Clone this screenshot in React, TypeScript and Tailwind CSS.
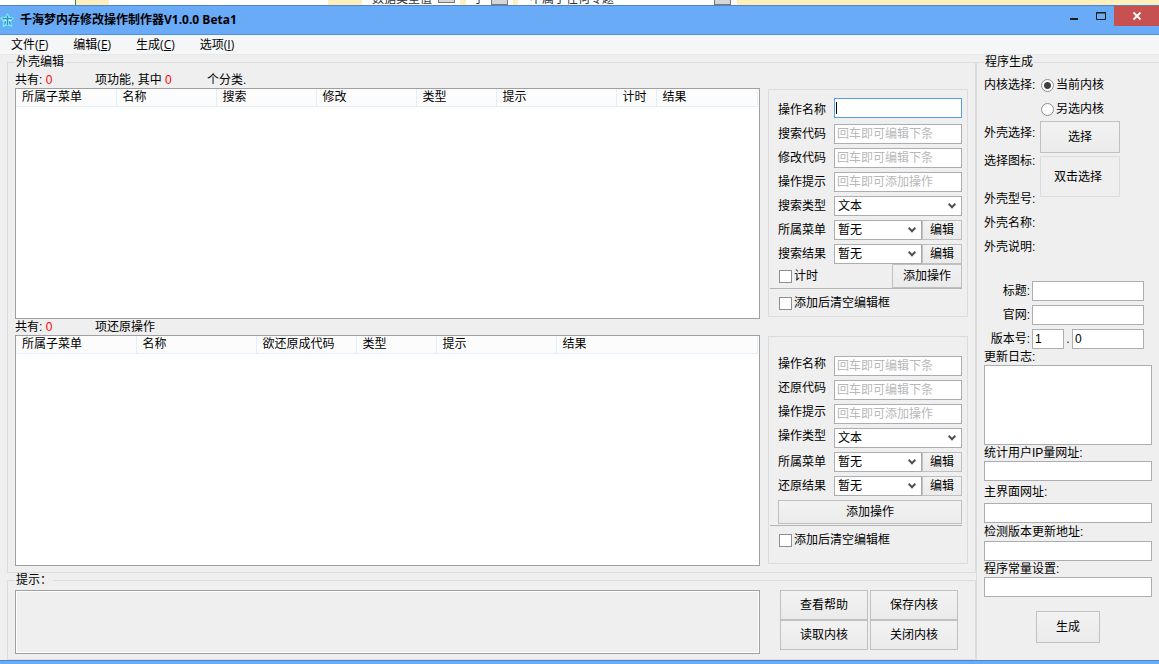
import { useId } from "react";
import clsx from "clsx";

const menus = [
  { label: "文件", hotkey: "F" },
  { label: "编辑", hotkey: "E" },
  { label: "生成", hotkey: "C" },
  { label: "选项", hotkey: "I" },
];

const featureColumns = [
  { label: "所属子菜单", width: "w-[100px]" },
  { label: "名称", width: "w-[100px]" },
  { label: "搜索", width: "w-[100px]" },
  { label: "修改", width: "w-[100px]" },
  { label: "类型", width: "w-20" },
  { label: "提示", width: "w-[120px]" },
  { label: "计时", width: "w-10" },
  { label: "结果", width: "w-auto" },
];

const restoreColumns = [
  { label: "所属子菜单", width: "w-[120px]" },
  { label: "名称", width: "w-[120px]" },
  { label: "欲还原成代码", width: "w-[100px]" },
  { label: "类型", width: "w-20" },
  { label: "提示", width: "w-[120px]" },
  { label: "结果", width: "w-auto" },
];

const urlFields = [
  { label: "统计用户IP量网址:", height: "leading-4" },
  { label: "主界面网址:", height: "leading-[22px]" },
  { label: "检测版本更新地址:", height: "leading-[18px]" },
  { label: "程序常量设置:", height: "leading-4" },
];

const inputClass =
  "h-5 min-w-0 border bg-white px-[2px] text-[12px] leading-4 text-black placeholder:text-[#b8b8b8] placeholder:opacity-100 focus:outline-none";

function Button({ children, className }: { children: React.ReactNode; className?: string }) {
  return (
    <button
      type="button"
      className={clsx(
        "shrink-0 border border-[#c0c0c0] bg-gradient-to-b from-[#f2f2f2] to-[#ebebeb] text-center leading-4 active:bg-[#dadada]",
        className,
      )}
    >
      {children}
    </button>
  );
}

function Group({ title, className, children }: { title: string; className?: string; children: React.ReactNode }) {
  return (
    <fieldset className={clsx("min-w-0 border border-[#dcdcdc]", className)}>
      <legend className="ml-[7px] px-px leading-[14px]">{title}</legend>
      {children}
    </fieldset>
  );
}

function ListView({ columns }: { columns: { label: string; width: string }[] }) {
  return (
    <div className="h-[231px] border border-[#a0a0a0] bg-white pr-px">
      <table className="w-full table-fixed">
        <thead>
          <tr>
            {columns.map((col) => (
              <th
                key={col.label}
                className={clsx(
                  "h-[17px] border-r border-b border-[#e3eefb] bg-[#fcfcfc] pl-[6px] text-left leading-4 font-normal whitespace-nowrap",
                  col.width,
                )}
              >
                {col.label}
              </th>
            ))}
          </tr>
        </thead>
        <tbody />
      </table>
    </div>
  );
}

function TextRow({ label, hint, focused, raised }: { label: string; hint?: string; focused?: boolean; raised?: boolean }) {
  const id = useId();
  return (
    <div className={clsx("flex h-5", focused ? "items-end" : raised ? "items-start" : "items-center")}>
      <label htmlFor={id} className="w-14 shrink-0 leading-4">
        {label}
      </label>
      <div className="relative flex-1">
        <input
          id={id}
          type="text"
          placeholder={focused ? " " : hint}
          className={clsx(inputClass, "peer block w-full", focused ? "border-[#569de5]" : "border-[#abadb3]")}
        />
        {focused && (
          <span className="pointer-events-none absolute top-1 left-[2px] hidden h-3 w-px bg-black peer-placeholder-shown:block peer-focus:hidden" />
        )}
      </div>
    </div>
  );
}

function SelectRow({ label, value, editable, raised }: { label: string; value: string; editable?: boolean; raised?: boolean }) {
  const id = useId();
  return (
    <div className={clsx("flex h-5", raised ? "items-start" : "items-center")}>
      <label htmlFor={id} className="w-14 shrink-0 leading-4">
        {label}
      </label>
      <div className="relative flex-1">
        <select
          id={id}
          className="block h-5 w-full appearance-none border border-[#abadb3] bg-white pl-[3px] leading-4 text-black"
        >
          <option>{value}</option>
        </select>
        <svg
          viewBox="0 0 8 6"
          className="pointer-events-none absolute top-[7px] right-[6px] h-[6px] w-2"
          fill="none"
          stroke="#505050"
          strokeWidth="2"
        >
          <path d="M.7 .8 4 4.2 7.3 .8" />
        </svg>
      </div>
      {editable && <Button className="h-5 w-10">编辑</Button>}
    </div>
  );
}

function CheckBox({ label }: { label: string }) {
  return (
    <label className="flex items-center leading-4">
      <input
        type="checkbox"
        className="mr-[2px] ml-px h-[13px] w-[13px] appearance-none border border-[#8e8e8e] bg-white checked:bg-[#404040]"
      />
      {label}
    </label>
  );
}

function Radio({ label, defaultChecked }: { label: string; defaultChecked?: boolean }) {
  return (
    <label className="flex h-6 items-center leading-4">
      <input
        type="radio"
        name="kernel"
        defaultChecked={defaultChecked}
        className="mr-[2px] ml-[2px] h-[13px] w-[13px] appearance-none rounded-full border border-[#8e8e8e] bg-white checked:bg-[radial-gradient(circle,#404040_3px,#fff_4px)]"
      />
      {label}
    </label>
  );
}

// Sliver of the window that sits behind this one
function BackgroundStrip() {
  return (
    <div className="flex h-[5px] items-end overflow-hidden bg-[#fff0bb] leading-3 whitespace-nowrap text-[#333]" aria-hidden="true">
      <div className="h-full w-[76px] shrink-0 border-r border-[#2e8b2e] bg-white" />
      <div className="ml-[33px] h-full w-[219px] shrink-0 bg-white" />
      <div className="ml-[34px] flex h-full w-[98px] shrink-0 items-end bg-white pl-[10px]">
        <span className="w-[66px]">数据类型值</span>
        <span className="mb-[2px] h-[3px] w-[17px] border border-t-0 border-[#777] bg-[#d6d6d6]" />
      </div>
      <div className="ml-[6px] flex h-full w-[47px] shrink-0 items-end bg-white pl-[7px]">
        <span className="w-[18px]">子</span>
        <span className="h-[5px] w-[17px] border border-t-0 border-[#777] bg-[#d6d6d6]" />
      </div>
      <div className="ml-[5px] flex h-full w-[219px] shrink-0 items-end bg-white pl-3">
        <span className="w-[184px]">不属于任何专题</span>
        <span className="h-[5px] w-[17px] border border-t-0 border-[#777] bg-[#d6d6d6]" />
      </div>
    </div>
  );
}

function TitleBar() {
  return (
    <header className="flex h-[30px] items-start border-t border-b border-t-[#4a86c8] border-b-[#5290d8] bg-[#6aabf7]">
      <svg viewBox="0 0 15 17" className="mt-[6px] h-[17px] w-[15px] shrink-0">
        <path
          d="M7.5 .6 9.9 4.6 14.6 5.6 11.6 9.6 12.6 15.6 7.5 13.8 2 15.8 3 9.8 0 6.4V5.2L4.8 4.6Z"
          fill="#8fe6f5"
          stroke="#4fc3e8"
          strokeLinejoin="round"
        />
        <path d="M7.5 3.6V13M2.6 6.6h9.6M4.6 12.6 5.6 9.2M10.4 12.6 9.4 9.2" stroke="#2c8fd2" strokeWidth="1.3" fill="none" />
        <path d="M4.8 8.4h1.6M8.8 8.4h1.6" stroke="#fff" />
      </svg>
      <h1 className="ml-[5px] flex-1 font-['Open_Sans','Noto_Sans_CJK_SC',sans-serif] text-[12px] leading-7 font-bold">
        千海梦内存修改操作制作器V1.0.0 Beta1
      </h1>
      <button type="button" aria-label="最小化" className="flex h-5 w-7 items-center justify-center">
        <svg viewBox="0 0 10 10" className="h-[10px] w-[10px]">
          <path d="M1 8h8" stroke="#1a1a1a" strokeWidth="2" />
        </svg>
      </button>
      <button type="button" aria-label="最大化" className="flex h-5 w-[26px] items-center justify-center">
        <svg viewBox="0 0 12 10" className="h-[10px] w-3">
          <path d="M1.5 1.5h9v7h-9ZM1 2h10" stroke="#1a1a1a" fill="none" />
        </svg>
      </button>
      <button type="button" aria-label="关闭" className="flex h-5 w-[45px] items-center justify-center bg-[#c75050]">
        <svg viewBox="0 0 10 10" className="h-[10px] w-[10px]">
          <path d="M1.5 1.5l7 7M8.5 1.5l-7 7" stroke="#fff" strokeWidth="1.8" />
        </svg>
      </button>
    </header>
  );
}

export default function App() {
  return (
    <div className="flex min-h-screen flex-col overflow-hidden bg-[#efefef] font-['Liberation_Sans','Noto_Sans_CJK_SC',sans-serif] text-[12px] text-black">
      <BackgroundStrip />
      <TitleBar />

      <nav className="flex h-5 items-center gap-[25px] border-b border-[#e8e8e8] bg-[#f5f6f7] pt-px pl-[11px] font-['Open_Sans','Noto_Sans_CJK_SC',sans-serif]">
        {menus.map((menu) => (
          <button key={menu.hotkey} type="button" className="leading-4">
            {menu.label}(<u>{menu.hotkey}</u>)
          </button>
        ))}
      </nav>

      <main className="flex flex-1">
        <div className="flex min-w-0 flex-1 flex-col pl-[7px]">
          <Group title="外壳编辑">
            <div className="flex gap-2 px-[7px] pb-[6px]">
              <div className="min-w-0 flex-1">
                <p className="mt-[3px] flex leading-4">
                  <span className="w-20">
                    共有: <span className="text-[#ff0000]">0</span>
                  </span>
                  <span className="w-28">
                    项功能, 其中 <span className="text-[#ff0000]">0</span>
                  </span>
                  <span>个分类.</span>
                </p>
                <ListView columns={featureColumns} />
                <p className="flex leading-4">
                  <span className="w-20">
                    共有: <span className="text-[#ff0000]">0</span>
                  </span>
                  <span>项还原操作</span>
                </p>
                <ListView columns={restoreColumns} />
              </div>

              <div className="flex w-[200px] shrink-0 flex-col gap-[19px] pt-5">
                <section className="h-[228px] border border-[#dcdcdc] pt-2 pr-[5px] pl-[9px]">
                  <div className="mb-[6px]">
                    <TextRow label="操作名称" focused />
                  </div>
                  <div className="flex flex-col gap-1">
                    <TextRow label="搜索代码" hint="回车即可编辑下条" />
                    <TextRow label="修改代码" hint="回车即可编辑下条" />
                    <TextRow label="操作提示" hint="回车即可添加操作" />
                    <SelectRow label="搜索类型" value="文本" />
                    <SelectRow label="所属菜单" value="暂无" editable />
                    <SelectRow label="搜索结果" value="暂无" editable />
                  </div>
                  <div className="flex items-center justify-between">
                    <CheckBox label="计时" />
                    <Button className="h-6 w-[70px]">添加操作</Button>
                  </div>
                  <hr className="mb-[6px] -ml-2 border-[#b4b4b4]" />
                  <CheckBox label="添加后清空编辑框" />
                </section>

                <section className="h-[228px] border border-[#dcdcdc] pt-[19px] pr-[5px] pl-[9px]">
                  <div className="flex flex-col gap-1">
                    <TextRow label="操作名称" hint="回车即可编辑下条" raised />
                    <TextRow label="还原代码" hint="回车即可编辑下条" raised />
                    <TextRow label="操作提示" hint="回车即可添加操作" raised />
                    <SelectRow label="操作类型" value="文本" raised />
                    <SelectRow label="所属菜单" value="暂无" editable />
                    <SelectRow label="还原结果" value="暂无" editable />
                    <Button className="h-6 w-full">添加操作</Button>
                  </div>
                  <hr className="mt-px mb-[6px] -ml-2 border-[#b4b4b4]" />
                  <CheckBox label="添加后清空编辑框" />
                </section>
              </div>
            </div>
          </Group>

          <Group title="提示：">
            <div className="flex px-[7px] pt-[3px] pb-[5px]">
              <div className="min-w-0 flex-1 border border-[#a0a0a0]">
                <output className="block h-full border border-white" />
              </div>
              <div className="mr-[10px] ml-5 grid w-[178px] shrink-0 grid-cols-2 gap-x-[2px] pb-1">
                <Button className="h-[30px]">查看帮助</Button>
                <Button className="h-[30px]">保存内核</Button>
                <Button className="h-[30px]">读取内核</Button>
                <Button className="h-[30px]">关闭内核</Button>
              </div>
            </div>
          </Group>
        </div>

        <Group title="程序生成" className="w-[183px] shrink-0 border-r-0 border-b-0">
          <div className="flex flex-col px-[7px] pt-1">
            <div className="flex">
              <div className="flex w-[55px] shrink-0 flex-col leading-6">
                <span className="mb-6">内核选择:</span>
                <span>外壳选择:</span>
                <span className="mt-1">选择图标:</span>
                <span className="mt-[14px]">外壳型号:</span>
                <span>外壳名称:</span>
                <span>外壳说明:</span>
              </div>
              <div className="flex flex-col">
                <Radio label="当前内核" defaultChecked />
                <Radio label="另选内核" />
                <Button className="mb-[3px] ml-px h-8 w-20">选择</Button>
                <button type="button" className="ml-px h-[41px] w-20 border border-[#dcdcdc] pr-1">
                  双击选择
                </button>
              </div>
            </div>

            <div className="mt-[22px] flex flex-col gap-1 pr-2">
              <div className="flex items-center">
                <label htmlFor="title" className="w-12 pr-[2px] text-right leading-4">标题:</label>
                <input id="title" type="text" className={clsx(inputClass, "flex-1 border-[#abadb3]")} />
              </div>
              <div className="flex items-center">
                <label htmlFor="site" className="w-12 pr-[2px] text-right leading-4">官网:</label>
                <input id="site" type="text" className={clsx(inputClass, "flex-1 border-[#abadb3]")} />
              </div>
              <div className="flex items-center">
                <label htmlFor="major" className="w-12 pr-[2px] text-right leading-4">版本号:</label>
                <input id="major" type="text" defaultValue="1" className={clsx(inputClass, "w-8 border-[#abadb3]")} />
                <span className="w-2 text-center">.</span>
                <input type="text" defaultValue="0" aria-label="次版本号" className={clsx(inputClass, "flex-1 border-[#abadb3]")} />
              </div>
            </div>

            <label htmlFor="changelog" className="leading-4">更新日志:</label>
            <textarea id="changelog" className="h-20 resize-none border border-[#abadb3] bg-white" />
            {urlFields.map((field) => (
              <label key={field.label} className={clsx("flex flex-col", field.height)}>
                {field.label}
                <input type="text" className={clsx(inputClass, "border-[#abadb3]")} />
              </label>
            ))}
            <Button className="mt-[14px] h-8 w-16 self-center">生成</Button>
          </div>
        </Group>
      </main>

      <div className="h-[5px] border-t border-[#4a86c8] bg-[#6aabf7]" />
    </div>
  );
}
